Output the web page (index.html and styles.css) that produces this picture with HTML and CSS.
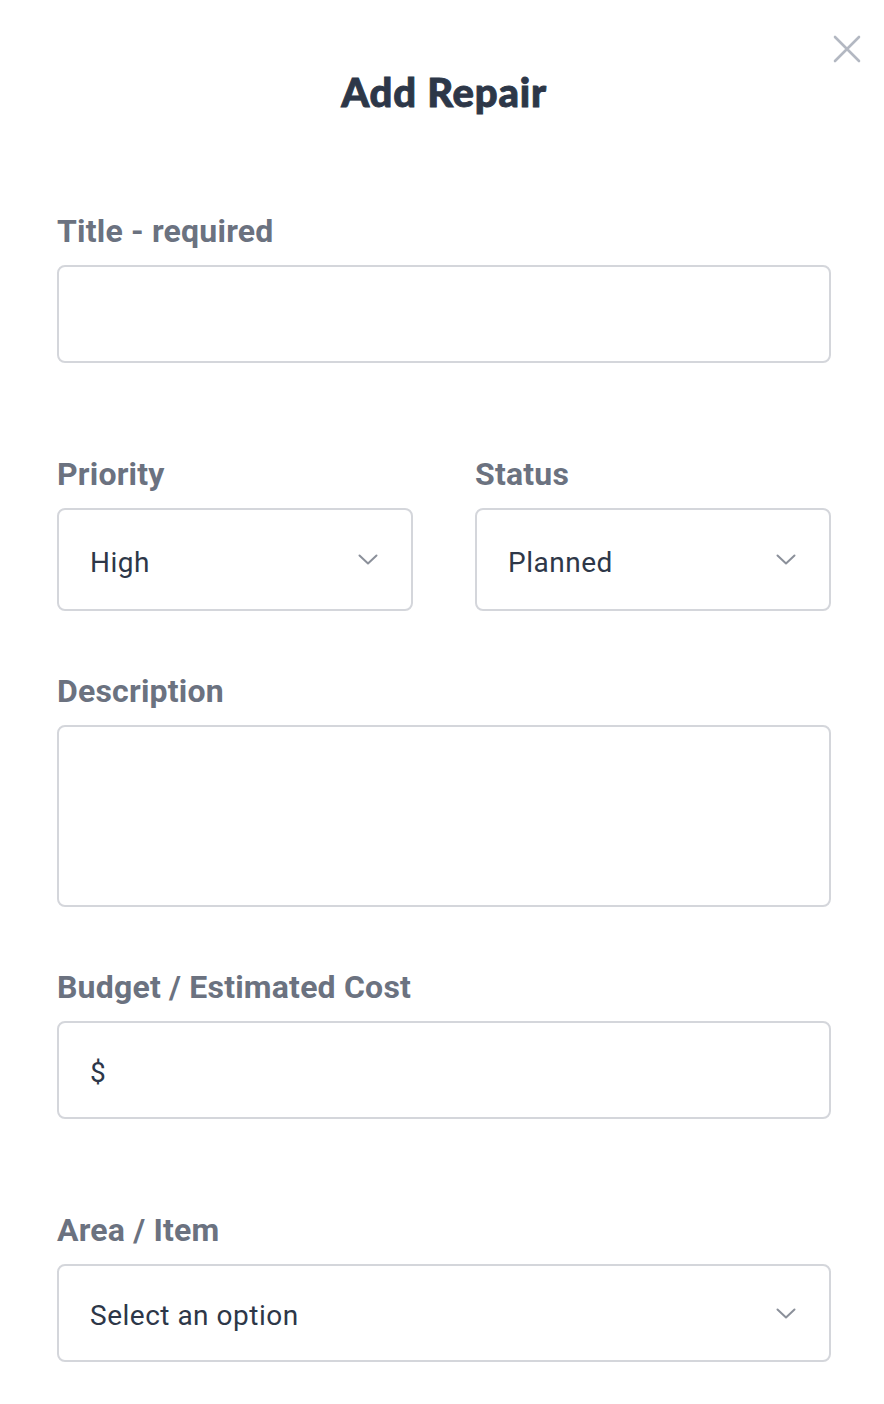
FILE: index.html
```html
<!DOCTYPE html>
<html lang="en">
<head>
<meta charset="utf-8">
<title>Add Repair</title>
<link rel="stylesheet" href="styles.css">
</head>
<body>
<div class="dialog">
  <button class="close" aria-label="Close">
    <svg width="28" height="28" viewBox="0 0 28 28"><path d="M2 2 L26 26 M26 2 L2 26" stroke="currentColor" stroke-width="2.6" stroke-linecap="round" fill="none"/></svg>
  </button>
  <h1 class="title">Add Repair</h1>

  <div class="field field-first">
    <label class="label">Title - required</label>
    <div class="control"></div>
  </div>

  <div class="row field field-wide">
    <div class="col">
      <label class="label">Priority</label>
      <div class="control control-select tall">
        <span class="value">High</span>
        <svg class="chev" width="20" height="11" viewBox="0 0 20 11"><path d="M1.5 1.5 L10 9.5 L18.5 1.5" stroke="currentColor" stroke-width="2" fill="none" stroke-linecap="round" stroke-linejoin="round"/></svg>
      </div>
    </div>
    <div class="col">
      <label class="label">Status</label>
      <div class="control control-select tall">
        <span class="value">Planned</span>
        <svg class="chev" width="20" height="11" viewBox="0 0 20 11"><path d="M1.5 1.5 L10 9.5 L18.5 1.5" stroke="currentColor" stroke-width="2" fill="none" stroke-linecap="round" stroke-linejoin="round"/></svg>
      </div>
    </div>
  </div>

  <div class="field field-near">
    <label class="label">Description</label>
    <div class="control textarea"></div>
  </div>

  <div class="field field-near">
    <label class="label">Budget / Estimated Cost</label>
    <div class="control"><span class="value">$</span></div>
  </div>

  <div class="field field-wide">
    <label class="label">Area / Item</label>
    <div class="control control-select">
      <span class="value">Select an option</span>
      <svg class="chev" width="20" height="11" viewBox="0 0 20 11"><path d="M1.5 1.5 L10 9.5 L18.5 1.5" stroke="currentColor" stroke-width="2" fill="none" stroke-linecap="round" stroke-linejoin="round"/></svg>
    </div>
  </div>
</div>
</body>
</html>
```

FILE: styles.css
```css
* { box-sizing: border-box; }
html, body { margin: 0; padding: 0; background: #ffffff; }
body { font-family: Roboto, "Liberation Sans", sans-serif; }

.dialog {
  position: relative;
  padding: 68px 53px 40px 57px;
}

.close {
  position: absolute;
  top: 35px;
  right: 23px;
  width: 28px;
  height: 28px;
  padding: 0;
  border: 0;
  background: none;
  color: #b3b8c2;
  display: flex;
}

.title {
  margin: 0;
  text-align: center;
  font-family: Lato, "Open Sans", sans-serif;
  font-weight: 900;
  font-size: 40px;
  line-height: 48px;
  color: #2d3748;
  letter-spacing: 0.8px;
  -webkit-text-stroke: 0.9px #2d3748;
}

.field { display: flex; flex-direction: column; }
.field-first { margin-top: 96px; }
.field-wide { margin-top: 92px; }
.field-near { margin-top: 61px; }

.row {
  display: grid;
  grid-template-columns: 1fr 1fr;
  column-gap: 62px;
}
.col { display: flex; flex-direction: column; }

.label {
  display: block;
  font-weight: 700;
  font-size: 32px;
  line-height: 38px;
  letter-spacing: 0.2px;
  color: #6b7280;
  margin-bottom: 15px;
}

.control {
  height: 98px;
  border: 2px solid #d4d6db;
  border-radius: 8px;
  display: flex;
  align-items: center;
  padding: 0 33px 0 31px;
}
.control.tall { height: 103px; }
.control.textarea { height: 182px; }

.control-select { justify-content: space-between; }

.value {
  font-size: 28px;
  color: #2d3748;
  letter-spacing: 0.5px;
  padding-top: 5px;
}

.chev { color: #8b909a; display: block; }
```
